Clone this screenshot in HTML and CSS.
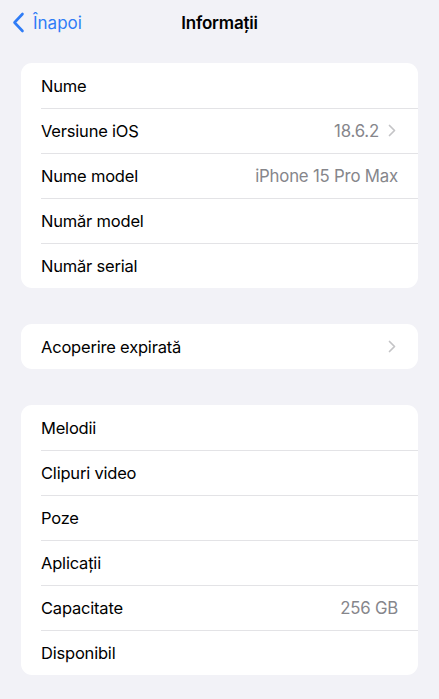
FILE: index.html
```html
<!DOCTYPE html>
<html lang="ro">
<head>
  <meta charset="utf-8">
  <link rel="stylesheet" href="styles.css">
</head>
<body>
  <div class="nav">
    <a class="back" href="#">
      <svg class="back-icon" width="13" height="21" viewBox="0 0 13 21">
        <path d="M10.5 2 L2.5 10.5 L10.5 19" fill="none" stroke="currentColor" stroke-width="2.6" stroke-linecap="round" stroke-linejoin="round"/>
      </svg>
      <span>Înapoi</span>
    </a>
    <div class="title">Informații</div>
  </div>

  <div class="group">
    <div class="row"><span class="label">Nume</span><span class="value"></span></div>
    <div class="row">
      <span class="label">Versiune iOS</span><span class="value">18.6.2</span>
      <svg class="chevron" width="8" height="13" viewBox="0 0 8 13"><path d="M1.5 1.5 L6.5 6.5 L1.5 11.5" fill="none" stroke="currentColor" stroke-width="1.7" stroke-linecap="round" stroke-linejoin="round"/></svg>
    </div>
    <div class="row"><span class="label">Nume model</span><span class="value">iPhone 15 Pro Max</span></div>
    <div class="row"><span class="label">Număr model</span><span class="value"></span></div>
    <div class="row"><span class="label">Număr serial</span><span class="value"></span></div>
  </div>

  <div class="group">
    <div class="row">
      <span class="label">Acoperire expirată</span><span class="value"></span>
      <svg class="chevron" width="8" height="13" viewBox="0 0 8 13"><path d="M1.5 1.5 L6.5 6.5 L1.5 11.5" fill="none" stroke="currentColor" stroke-width="1.7" stroke-linecap="round" stroke-linejoin="round"/></svg>
    </div>
  </div>

  <div class="group">
    <div class="row"><span class="label">Melodii</span><span class="value"></span></div>
    <div class="row"><span class="label">Clipuri video</span><span class="value"></span></div>
    <div class="row"><span class="label">Poze</span><span class="value"></span></div>
    <div class="row"><span class="label">Aplicații</span><span class="value"></span></div>
    <div class="row"><span class="label">Capacitate</span><span class="value">256 GB</span></div>
    <div class="row"><span class="label">Disponibil</span><span class="value"></span></div>
  </div>
</body>
</html>
```

FILE: styles.css
```css
body {
  margin: 0;
  background: #F2F2F7;
  font-family: Inter, "Noto Sans", sans-serif;
  color: #000;
  -webkit-font-smoothing: antialiased;
}

.nav {
  position: relative;
  height: 44px;
  display: flex;
  align-items: center;
  justify-content: center;
  margin-bottom: 19px;
  padding-top: 1px;
  box-sizing: border-box;
}

.back {
  position: absolute;
  left: 12px;
  top: 12px;
  display: flex;
  align-items: center;
  gap: 8px;
  color: #2F7CF6;
  text-decoration: none;
  font-size: 17px;
}

.title {
  font-size: 17px;
  font-weight: 600;
  letter-spacing: -0.2px;
}

.group {
  margin: 0 21px 36px;
  background: #fff;
  border-radius: 11px;
  overflow: hidden;
}

.row {
  height: 45px;
  display: flex;
  align-items: center;
  padding: 0 20px;
  position: relative;
  font-size: 16.5px;
  letter-spacing: -0.2px;
}

.row + .row::before {
  content: "";
  position: absolute;
  top: 0;
  left: 20px;
  right: 0;
  height: 1px;
  background: #E3E3E6;
}

.label {
  flex: 1;
}

.value {
  color: #86868B;
  font-size: 16.8px;
}

.chevron {
  color: #C4C4C7;
  margin: 0 2px 0 9px;
}
```
